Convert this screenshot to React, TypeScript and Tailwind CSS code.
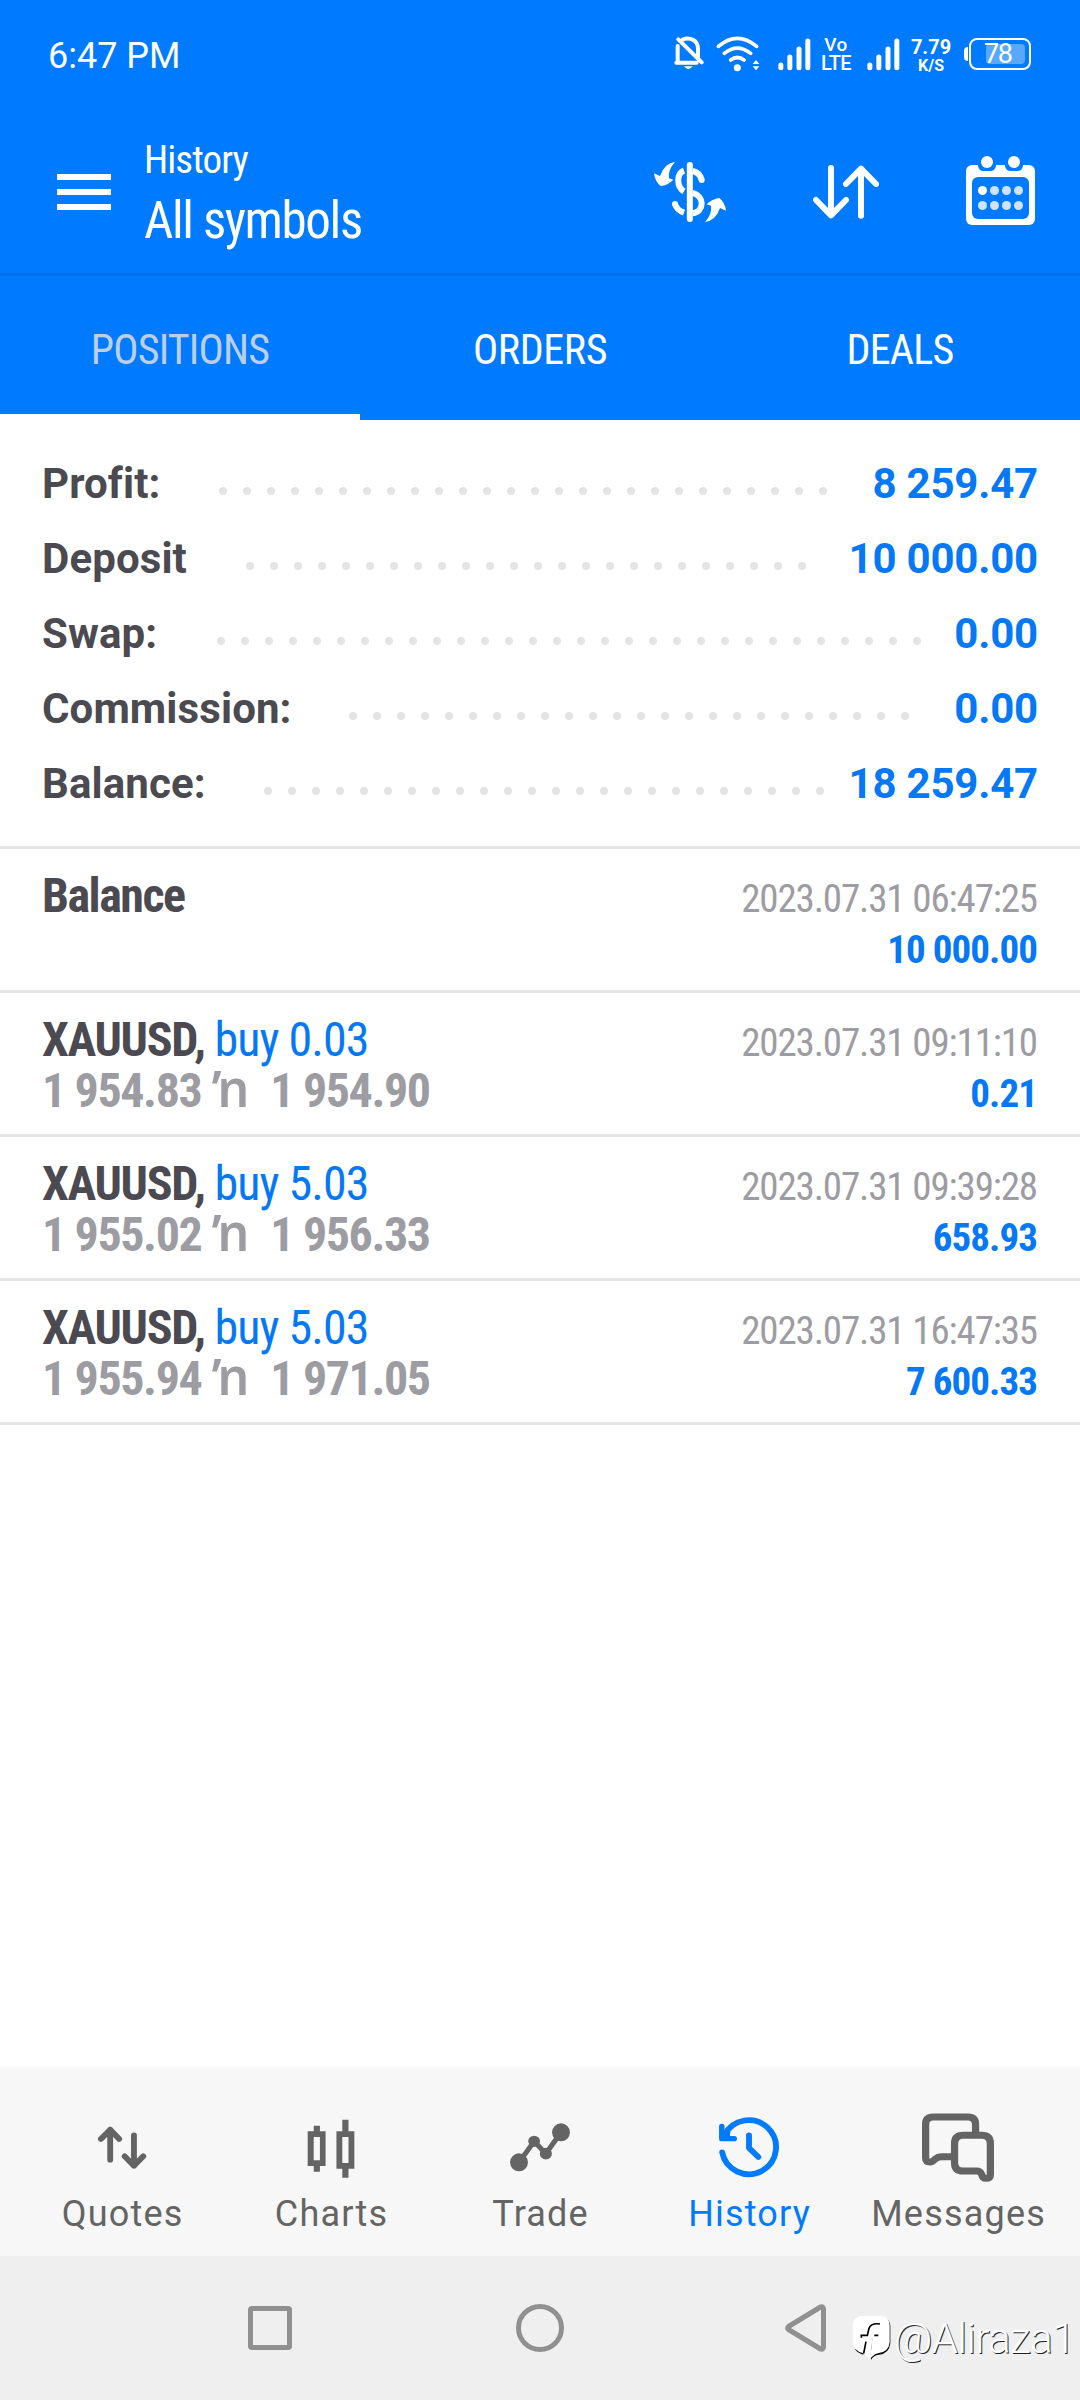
import type { ReactNode } from 'react';

const summary = [
  { label: 'Profit:', value: '8 259.47', start: 'left-[177.3px]', dots: 26 },
  { label: 'Deposit', value: '10 000.00', start: 'left-[204.3px]', dots: 24 },
  { label: 'Swap:', value: '0.00', start: 'left-[175px]', dots: 30 },
  { label: 'Commission:', value: '0.00', start: 'left-[307.2px]', dots: 24 },
  { label: 'Balance:', value: '18 259.47', start: 'left-[222px]', dots: 24 },
];

const deals = [
  { volume: 'buy 0.03', open: '1 954.83', close: '1 954.90', time: '2023.07.31 09:11:10', profit: '0.21' },
  { volume: 'buy 5.03', open: '1 955.02', close: '1 956.33', time: '2023.07.31 09:39:28', profit: '658.93' },
  { volume: 'buy 5.03', open: '1 955.94', close: '1 971.05', time: '2023.07.31 16:47:35', profit: '7 600.33' },
];

function Signal({ className }: { className: string }) {
  return (
    <svg className={className} width="33" height="33" viewBox="410 53 99 99" stroke="white" strokeWidth="15" strokeLinecap="round">
      <path d="M418.500 134v8M445.500 110v32M473 86v56M499.500 62v80" />
    </svg>
  );
}

function StatusBar() {
  return (
    <div className="flex h-[112px] items-center pl-12 font-['Roboto'] text-white">
      <span className="text-4xl leading-none">6:47 PM</span>
      <div className="ml-auto flex h-full items-center pr-[49px]">
        <svg width="30" height="36" viewBox="100 50 90 108" className="-mt-1" fill="none" stroke="white" strokeWidth="12" strokeLinecap="round">
          <path d="M111 80V128M107 130H168M126 61Q143 54 158 62Q172 70 172 88V112" />
          <path d="M113 60L183 129" />
          <path d="M130 141h26q-13 17-26 0z" fill="white" stroke="none" />
        </svg>
        <svg width="44" height="36" viewBox="225 45 132 108" className="-mt-1 ml-[12px]" fill="none" stroke="white" strokeWidth="11" strokeLinecap="round">
          <path d="M232 76Q289 28 347 76M250 97Q289 66 329 97M269 117Q289 102 309 117" />
          <circle cx="289" cy="140" r="10.500" fill="white" stroke="none" />
          <path d="M335 129l10-12l10 12zM335 136l10 12l10-12z" fill="white" stroke="none" />
        </svg>
        <Signal className="-mt-1 ml-[18px]" />
        <div className="-mt-1 ml-[7px] flex w-[36px] flex-col text-center font-medium">
          <span className="text-[19px] leading-[18px] tracking-[0.5px]">Vo</span>
          <span className="text-[20px] leading-[18px] tracking-[-0.6px]">LTE</span>
        </div>
        <Signal className="-mt-1 ml-[13px]" />
        <div className="ml-[9px] flex w-[44px] flex-col text-center font-bold">
          <span className="text-[20px] leading-[19px]">7.79</span>
          <span className="text-[16px] leading-[17px]">K/S</span>
        </div>
        <div className="relative -mt-1 ml-[11px] flex h-8 w-[67px] items-center">
          <div className="h-[14px] w-1 rounded-l-sm bg-white" />
          <div className="ml-px flex h-8 flex-1 items-center justify-end rounded-lg border-2 border-white pr-1">
            <div className="h-5 w-[39px] rounded-sm bg-[#59a8ff]" />
          </div>
          <span className="absolute left-[20px] text-[27px] leading-8 tracking-[-1.5px]">78</span>
        </div>
      </div>
    </div>
  );
}

function Header() {
  return (
    <div className="flex h-[161px] text-white">
      <div className="mt-[62px] ml-[57px] flex w-[54px] flex-col gap-[9px]">
        <div className="h-1.5 bg-white" />
        <div className="h-1.5 bg-white" />
        <div className="h-1.5 bg-white" />
      </div>
      <div className="ml-[33px] flex flex-col pt-[25px]">
        <span className="text-[39px] leading-[46px] tracking-[-0.9px]">History</span>
        <span className="text-[51px] leading-[76px] tracking-[-1.4px]">All symbols</span>
      </div>
      <svg className="mt-[49px] ml-auto" width="74" height="62" viewBox="99 93 222 186" fill="none" stroke="white" strokeWidth="18">
        <path d="M209.500 105V267" strokeLinecap="round" />
        <path d="M192 122C170 130 168 170 192 184" />
        <path d="M218 123Q240 128 245 150" />
        <circle cx="245" cy="150" r="9" fill="white" stroke="none" />
        <path d="M192 248Q170 240 165 222" />
        <circle cx="165" cy="222" r="9" fill="white" stroke="none" />
        <path d="M218 189C254 198 254 244 218 250" />
        <path d="M165 96Q133 100 120 138L102 130Q105 155 122 168Q143 166 160 149L147 145Q143 120 165 96z" fill="white" stroke="none" />
        <path d="M165 96Q133 100 120 138L102 130Q105 155 122 168Q143 166 160 149L147 145Q143 120 165 96z" fill="white" stroke="none" transform="rotate(180 210 186)" />
      </svg>
      <svg className="mt-[53px] ml-[86px]" width="66" height="54" viewBox="579 105 198 162" fill="none" stroke="white" strokeWidth="18" strokeLinecap="round" strokeLinejoin="round">
        <path d="M633 114V256M588 210L633 256L678 210M723 257V116M678 162L723 116L768 162" />
      </svg>
      <svg className="mt-11 mr-[45px] ml-[87px]" width="69" height="69" viewBox="1038 78 207 207">
        <rect x="1038" y="105" width="207" height="180" rx="18" fill="white" />
        <path d="M1074 96V107Q1076 123 1092 123H1110Q1126 123 1128 107V96zM1155 96V107Q1157 123 1173 123H1191Q1207 123 1209 107V96z" fill="#007aff" />
        <rect x="1056" y="141" width="171" height="126" rx="18" fill="#007aff" />
        <circle cx="1101" cy="96" r="18" fill="white" />
        <circle cx="1182" cy="96" r="18" fill="white" />
        <circle cx="1087.500" cy="181.500" r="13.500" fill="white" />
        <g fill="#cce4ff">
          <circle cx="1123.500" cy="181.500" r="13.500" />
          <circle cx="1159.500" cy="181.500" r="13.500" />
          <circle cx="1195.500" cy="181.500" r="13.500" />
          <circle cx="1087.500" cy="226.500" r="13.500" />
          <circle cx="1123.500" cy="226.500" r="13.500" />
          <circle cx="1159.500" cy="226.500" r="13.500" />
          <circle cx="1195.500" cy="226.500" r="13.500" />
        </g>
      </svg>
    </div>
  );
}

function NavItem({ label, box, active, children }: { label: string; box: string; active?: boolean; children: ReactNode }) {
  return (
    <div className={active ? 'flex flex-1 flex-col items-center text-[#007aff]' : 'flex flex-1 flex-col items-center text-[#646464]'}>
      <svg width="90" height="72" viewBox={box} preserveAspectRatio="none" fill="none" stroke="currentColor" strokeLinecap="round" strokeLinejoin="round" className="mt-[46px]">
        {children}
      </svg>
      <span className="mt-[11px] pl-[1.2px] font-['Roboto'] text-[36px] leading-10 tracking-[1.2px]">{label}</span>
    </div>
  );
}

export default function App() {
  return (
    <div className="flex h-[2400px] w-[1080px] flex-col overflow-hidden bg-white font-['Roboto_Condensed']">
      <div className="bg-[#007aff]">
        <StatusBar />
        <Header />
        <div className="h-[3px] bg-[#0070eb]" />
        <div className="grid h-36 grid-cols-3 text-[42px] tracking-[-0.8px] text-white">
          <div className="flex items-center justify-center border-b-6 border-white pt-[9px] text-[#bccfe6]">POSITIONS</div>
          <div className="flex items-center justify-center pt-[3px] tracking-[-0.4px]">ORDERS</div>
          <div className="flex items-center justify-center pt-[3px]">DEALS</div>
        </div>
      </div>

      <div className="flex h-[426px] flex-col pt-[26px] font-['Roboto'] text-[42px] font-bold">
        {summary.map((row) => (
          <div key={row.label} className="relative mx-[42px] flex h-[75px] items-center justify-between leading-[75px]">
            <span className="tracking-[0.1px] text-[#4b4a50]">{row.label}</span>
            <div className={`absolute top-[41px] flex gap-4 ${row.start}`}>
              {Array.from({ length: row.dots }, (_, i) => (
                <div key={i} className="size-2 rounded-full bg-[#e4e4e4]" />
              ))}
            </div>
            <span className="tracking-[-0.2px] text-[#0578f5]">{row.value}</span>
          </div>
        ))}
      </div>

      <div className="border-t-3 border-[#e5e5e5]">
        <div className="flex h-36 justify-between border-b-3 border-[#e5e5e5] pr-[43px] pl-[42px]">
          <div className="pt-[21px] text-5xl leading-[51px] font-bold tracking-[-1.5px] text-[#4b4a50]">Balance</div>
          <div className="flex flex-col pt-[25px] text-right text-[39px] leading-[51px]">
            <span className="tracking-[-1.13px] text-[#9c9ca2]">2023.07.31 06:47:25</span>
            <span className="font-bold tracking-[-0.95px] text-[#0578f5]">10 000.00</span>
          </div>
        </div>
        {deals.map((d) => (
          <div key={d.time} className="flex h-36 justify-between border-b-3 border-[#e5e5e5] pr-[43px] pl-[42px]">
            <div className="flex flex-col pt-[21px] text-5xl leading-[51px]">
              <div className="h-[51px] whitespace-pre">
                <span className="font-bold tracking-[-1.3px] text-[#4b4a50]">XAUUSD, </span>
                <span className="tracking-[-0.95px] text-[#0578f5]">{d.volume}</span>
              </div>
              <div className="flex h-[51px] items-baseline font-bold tracking-[-1.4px] whitespace-pre text-[#9c9ca2]">
                <span>{d.open}</span>
                <span className="ml-[11px] w-[58px] font-['Noto_Sans'] text-[50px] leading-9 font-semibold">ŉ</span>
                <span>{d.close}</span>
              </div>
            </div>
            <div className="flex flex-col pt-[25px] text-right text-[39px] leading-[51px]">
              <span className="tracking-[-1.13px] text-[#9c9ca2]">{d.time}</span>
              <span className="font-bold tracking-[-0.95px] text-[#0578f5]">{d.profit}</span>
            </div>
          </div>
        ))}
      </div>

      <div className="mt-auto flex h-[191px] bg-[#f7f7f7] bg-linear-to-b from-white to-[#f7f7f7] to-[4px] px-[17.500px]">
        <NavItem label="Quotes" box="223.600 184 261.400 216">
          <path d="M320 330V240M293 268L320 240L346 268M389 257V348M362 320L389 348L416 320" strokeWidth="17" />
        </NavItem>
        <NavItem label="Charts" box="830.500 184 261.400 216">
          <g fill="currentColor" stroke="none">
            <path fillRule="evenodd" d="M911 228h18v17h16.500v104H929v17h-18v-17h-17.500V245H911zM911 262v70h18v-70z" />
            <path fillRule="evenodd" d="M994 210h18v35h17v112h-17v27h-18v-27h-17V245h17zM994 262v78h18v-78z" />
          </g>
        </NavItem>
        <NavItem label="Trade" box="-130.700 184 261.400 216">
          <path d="M-61 338L-17 275L17 312L61 248" strokeWidth="15" />
          <g fill="currentColor" stroke="none">
            <ellipse cx="-61" cy="338" rx="26" ry="27" />
            <ellipse cx="61" cy="248" rx="26" ry="27" />
            <circle cx="-17" cy="275" r="17" />
            <circle cx="17" cy="312" r="17.500" />
          </g>
        </NavItem>
        <NavItem label="History" active box="476.300 184 261.400 216">
          <path d="M529 308A79 81 0 1 0 536 256" strokeWidth="17" />
          <path d="M528 230V267H564" strokeWidth="16" />
          <path d="M528 267L550 244L548 267z" fill="currentColor" strokeWidth="6" />
          <path d="M607 257V295L634 322" strokeWidth="17" />
        </NavItem>
        <NavItem label="Messages" box="1083.300 184 261.400 216">
          <g strokeWidth="21" strokeLinecap="butt">
            <path d="M1265 250V224Q1265 202 1243 202H1142Q1120 202 1120 224V325Q1120 337 1133 337Q1140 337 1148 328Q1155 321 1168 321H1200" />
            <path d="M1229 257H1283Q1308 257 1308 282V375Q1308 386 1295 386Q1285 386 1283 375Q1279 364 1268 364H1229Q1204 364 1204 339V282Q1204 257 1229 257Z" />
          </g>
        </NavItem>
      </div>

      <div className="relative flex h-36 items-center bg-[#efefef]">
        <div className="ml-[248px] size-11 rounded-sm border-5 border-[#909090]" />
        <div className="ml-[224px] size-12 rounded-full border-5 border-[#909090]" />
        <svg className="ml-[221px]" width="41" height="48" viewBox="0 0 41 48" fill="none" stroke="#909090" strokeWidth="5" strokeLinejoin="round">
          <path d="M3.500 22.500L35.500 3Q38.500 2 38.500 5V43Q38.500 46 35.500 45L3.500 25.500Q2 24 3.500 22.500z" />
        </svg>
        <div className="absolute top-[59px] left-[852px] flex items-center">
          <svg width="40" height="48" viewBox="36 180 120 144">
            <path d="M66 186H125Q151 190 151 214V264Q148 296 117 299Q99 301 93 315V299L65 298Q40 289 41 262V214Q43 189 66 186z" fill="black" />
            <path d="M63 183H125Q149 186 149 212V262Q146 292 114 295Q104 296 98 304L91 310L97 250L70 295Q38 286 38 260V212Q40 186 63 183z" fill="white" />
            <path d="M98 245L91 310L70 297L80 246z" fill="#fff" />
            <path d="M120 207Q94 203 87 220L82 241H64V248M103 241h12M78 260L71 295" stroke="black" strokeWidth="5" fill="none" />
          </svg>
          <span className="ml-[2px] font-['Roboto'] text-[42px] leading-[48px] font-light tracking-[-0.5px] text-white [text-shadow:1px_1px_0_#222]">@Aliraza1</span>
        </div>
      </div>
    </div>
  );
}
